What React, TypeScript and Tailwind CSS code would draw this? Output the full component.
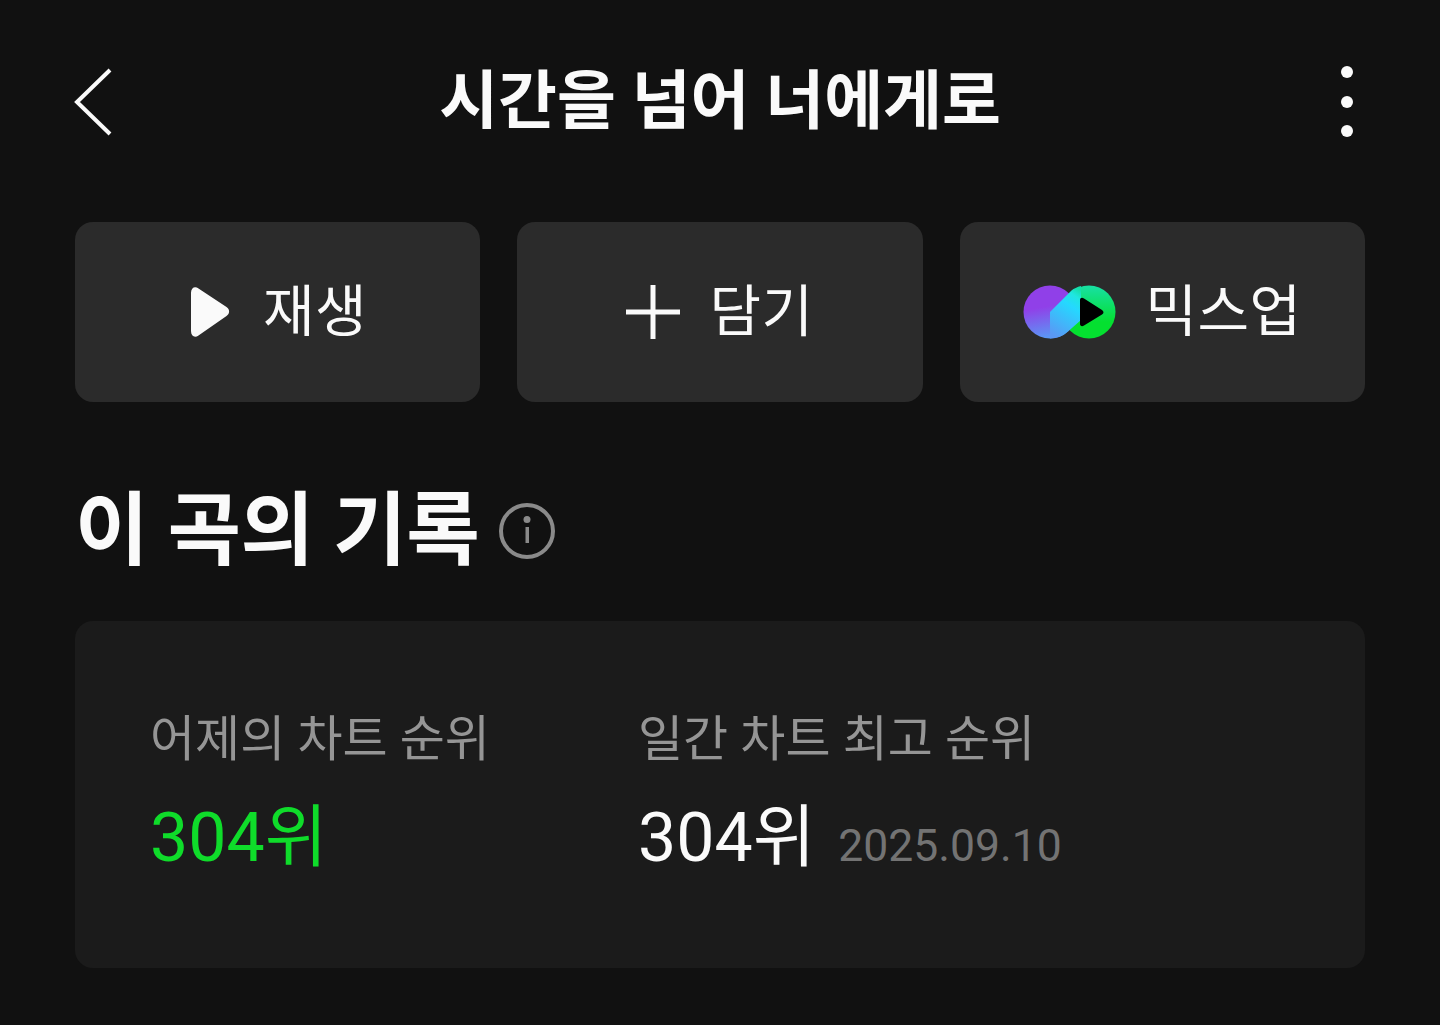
import React from 'react'

const font = "font-['Roboto','Noto_Sans_CJK_KR',sans-serif]"

const PlayIcon = () => (
  <svg width="40" height="52" viewBox="0 0 40 52" className="shrink-0">
    <path d="M1 7 C1 1.500 5 0 8.500 2.500 L36.500 21 C40 23.500 40 27.500 36.500 30 L8.500 49.500 C5 52 1 50.500 1 45 Z" fill="#fafafa" />
  </svg>
)

const PlusIcon = () => (
  <svg width="54" height="54" viewBox="0 0 54 54" className="shrink-0">
    <path d="M0 27 H54 M27 0 V54" stroke="#fafafa" strokeWidth="5" />
  </svg>
)

const MixupIcon = () => (
  <svg width="93" height="54" viewBox="0 0 93 54" className="shrink-0">
    <defs>
      <linearGradient id="mixLeft" gradientUnits="userSpaceOnUse" x1="22" y1="8" x2="30" y2="52">
        <stop offset="0.3" stopColor="#9040e8" />
        <stop offset="1" stopColor="#5a98f5" />
      </linearGradient>
      <linearGradient id="mixRight" gradientUnits="userSpaceOnUse" x1="66" y1="2" x2="66" y2="52">
        <stop offset="0" stopColor="#17e0a0" />
        <stop offset="0.7" stopColor="#04e030" />
      </linearGradient>
      <linearGradient id="mixBand" gradientUnits="userSpaceOnUse" x1="30" y1="50" x2="59" y2="6">
        <stop offset="0" stopColor="#5a98f5" />
        <stop offset="0.65" stopColor="#25d8ff" />
        <stop offset="0.85" stopColor="#20e6e0" />
        <stop offset="1" stopColor="#14dfa8" />
      </linearGradient>
    </defs>
    <circle cx="66" cy="27" r="26.500" fill="url(#mixRight)" />
    <circle cx="27" cy="27" r="26.500" fill="url(#mixLeft)" />
    <path d="M27 27 L48.500 5.500 C51 3.500 54 2 58 1 L58 35 L45 46.500 A26.500 26.500 0 0 1 27 53.500 Z" fill="url(#mixBand)" />
    <path d="M57 15 C57 13 59 12 61 13.500 L79 25 C81 26.500 81 28 79 29.500 L61 40.500 C59 42 57 41 57 39 Z" fill="#000" />
  </svg>
)

const InfoIcon = () => (
  <svg width="56" height="56" viewBox="0 0 56 56" className="shrink-0">
    <circle cx="28" cy="28" r="26" fill="none" stroke="#8a8a8a" strokeWidth="4" />
    <circle cx="28" cy="16.500" r="3.500" fill="#8a8a8a" />
    <rect x="26.500" y="24" width="3.500" height="16" fill="#8a8a8a" />
  </svg>
)

const ActionButton = ({ icon, label, gap }: { icon: React.ReactNode; label: string; gap: string }) => (
  <button className={`h-[180px] rounded-[18px] bg-[#2b2b2b] flex items-center justify-center ${gap}`}>
    {icon}
    <span className="text-[56px] leading-none text-[#fafafa] tracking-[0.5px]">{label}</span>
  </button>
)

export default function App() {
  return (
    <div className={`w-[1440px] h-[1025px] overflow-hidden bg-[#111111] px-[75px] ${font}`}>
      {/* Header */}
      <header className="relative h-[222px] flex items-start justify-between pt-[68px]">
        <svg width="38" height="68" viewBox="0 0 38 68" className="shrink-0 -ml-[1px]">
          <path d="M36 2 L3 34 L36 66" fill="none" stroke="#fafafa" strokeWidth="4" />
        </svg>
        <h1 className="absolute left-0 right-0 top-[62px] text-center text-[64px] leading-[80px] font-bold text-[#fafafa]">
          시간을 넘어 너에게로
        </h1>
        <div className="flex flex-col gap-[17.5px] mr-[12px] -mt-[2px]">
          <span className="w-[12px] h-[12px] rounded-full bg-[#fafafa]" />
          <span className="w-[12px] h-[12px] rounded-full bg-[#fafafa]" />
          <span className="w-[12px] h-[12px] rounded-full bg-[#fafafa]" />
        </div>
      </header>

      {/* Actions */}
      <div className="grid grid-cols-[405px_406px_405px] gap-[37px]">
        <ActionButton icon={<PlayIcon />} label="재생" gap="pl-[2px] gap-[33px]" />
        <ActionButton icon={<PlusIcon />} label="담기" gap="gap-[29px]" />
        <ActionButton icon={<MixupIcon />} label="믹스업" gap="gap-[29px]" />
      </div>

      {/* Record */}
      <div className="mt-[84px] flex items-center gap-[20px] h-[90px] mb-[45px]">
        <h2 className="text-[80px] leading-none font-bold text-[#fafafa] tracking-[-0.5px]">이 곡의 기록</h2>
        <InfoIcon />
      </div>

      <section className="h-[347px] rounded-[18px] bg-[#1b1b1b] px-[75px] pt-[89px] flex">
        <div className="w-[488px]">
          <p className="text-[49px] leading-[60px] text-[#959595]">어제의 차트 순위</p>
          <p className="mt-[28px] text-[68px] leading-[80px] text-[#0fdc2a]">304위</p>
        </div>
        <div>
          <p className="text-[49px] leading-[60px] text-[#959595]">일간 차트 최고 순위</p>
          <div className="mt-[28px] flex items-baseline gap-[23px]">
            <span className="text-[68px] leading-[80px] text-[#fafafa]">304위</span>
            <span className="text-[44.5px] text-[#737373]">2025.09.10</span>
          </div>
        </div>
      </section>
    </div>
  )
}
